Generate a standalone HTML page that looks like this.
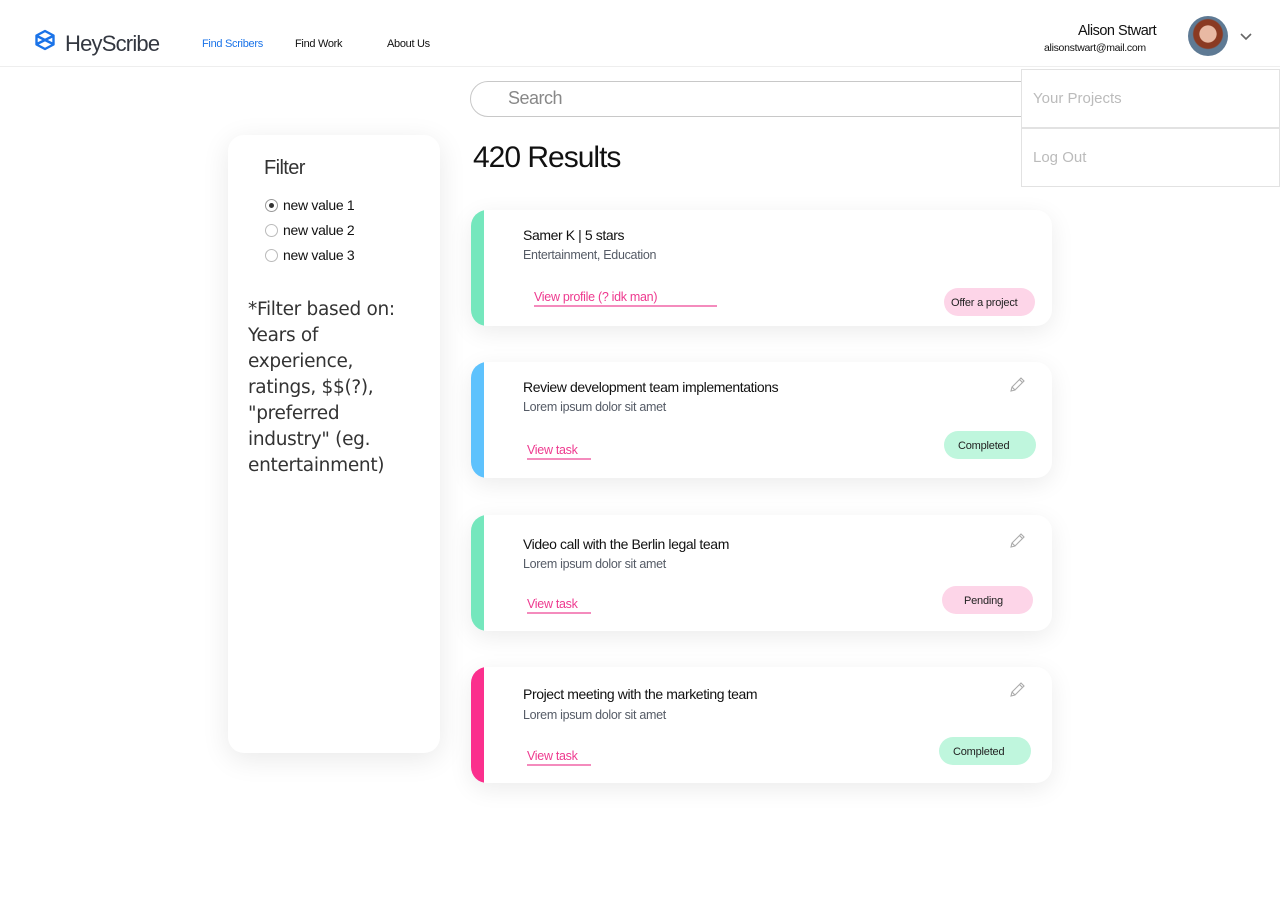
<!DOCTYPE html>
<html><head><meta charset="utf-8"><style>
*{box-sizing:border-box;margin:0;padding:0}
body{width:1280px;height:917px;background:#fff;font-family:"Liberation Sans",sans-serif;position:relative;overflow:hidden}
.a{position:absolute}
.hdr{left:0;top:0;width:1280px;height:67px;border-bottom:1px solid #eee}
.nav{font-size:11px;color:#111;top:38px;letter-spacing:-.3px}
.card{position:absolute;left:471px;width:581px;height:116px;background:#fff;border-radius:16px;box-shadow:0 6px 24px rgba(0,0,0,.08);overflow:hidden}
.card .s{position:absolute;left:0;top:0;width:13px;height:100%}
.card .t{position:absolute;left:52px;top:17px;font-size:14px;color:#111;letter-spacing:-.4px}
.card .d{position:absolute;left:52px;top:38px;font-size:12.5px;color:#555b66;letter-spacing:-.3px}
.card .l{position:absolute;left:56px;top:81px;font-size:12.5px;color:#ee3a8f;border-bottom:2px solid #f48bbd;padding-bottom:1px;letter-spacing:-.3px}
.pill{position:absolute;height:28px;border-radius:14px;font-size:11px;color:#222;line-height:30px;padding-left:14px;letter-spacing:-.2px}
.pen{position:absolute;right:26px;top:14px}
.dd{position:absolute;left:1021px;width:259px;height:59px;background:#fff;border:1px solid #e2e2e2;font-size:15px;color:#bbb;padding:20px 0 0 11px}
.r{position:absolute;left:265px;width:13px;height:13px;border:1px solid #bbb;border-radius:50%}
</style></head><body>
<div class="a hdr"></div>
<svg class="a" style="left:34px;top:29px" width="22" height="22" viewBox="0 0 22 22"><path d="M11 2L19.5 6.5V15.5L11 20L2.5 15.5V6.5Z M3 7L19 15 M19 7L3 15" fill="none" stroke="#1a73e8" stroke-width="2.4" stroke-linejoin="round"/></svg>
<div class="a" style="left:65px;top:31px;font-size:22px;color:#333740;letter-spacing:-.8px">HeyScribe</div>
<div class="a nav" style="left:202px;color:#1a73e8">Find Scribers</div>
<div class="a nav" style="left:295px">Find Work</div>
<div class="a nav" style="left:387px">About Us</div>
<div class="a" style="left:1078px;top:23px;font-size:14.5px;color:#111;letter-spacing:-.5px">Alison Stwart</div>
<div class="a" style="left:1044px;top:42px;font-size:10.5px;color:#111;letter-spacing:-.3px">alisonstwart@mail.com</div>
<div class="a" style="left:1188px;top:16px;width:40px;height:40px;border-radius:50%;background:radial-gradient(circle at 50% 45%,#e8b9a3 0 28%,#8a3a22 30% 48%,#5e7a94 52%)"></div>
<svg class="a" style="left:1239px;top:32px" width="14" height="9"><path d="M2 2L7 7L12 2" fill="none" stroke="#666" stroke-width="1.6"/></svg>
<div class="a" style="left:470px;top:81px;width:600px;height:36px;border:1px solid #c8c8c8;border-radius:18px"></div>
<div class="a" style="left:508px;top:88px;font-size:18px;color:#888;letter-spacing:-.5px">Search</div>
<div class="dd" style="top:69px">Your Projects</div>
<div class="dd" style="top:128px">Log Out</div>
<div class="a" style="left:228px;top:135px;width:212px;height:618px;background:#fff;border-radius:16px;box-shadow:0 6px 28px rgba(0,0,0,.09)"></div>
<div class="a" style="left:264px;top:157px;font-size:20px;color:#333;letter-spacing:-.6px">Filter</div>
<div class="r" style="top:199px;border-color:#999"><div style="width:5px;height:5px;background:#333;border-radius:50%;margin:3px"></div></div>
<div class="r" style="top:224px"></div>
<div class="r" style="top:249px"></div>
<div class="a" style="left:283px;top:193px;font-size:14px;color:#111;line-height:25px;letter-spacing:-.3px">new value 1<br>new value 2<br>new value 3</div>
<div class="a" style="left:248px;top:297px;width:190px;font-family:'DejaVu Sans',sans-serif;font-size:18.5px;line-height:26px;color:#333;letter-spacing:-.3px;white-space:nowrap">*Filter based on:<br>Years of<br>experience,<br>ratings, $$(?),<br>"preferred<br>industry" (eg.<br>entertainment)</div>
<div class="a" style="left:473px;top:141px;font-size:30px;color:#111;letter-spacing:-1px">420 Results</div>

<div class="card" style="top:210px"><div class="s" style="background:#75e7bd"></div><div class="t">Samer K | 5 stars</div><div class="d">Entertainment, Education</div><div class="l" style="left:63px;width:183px;top:80px">View profile (? idk man)</div><div class="pill" style="left:473px;top:78px;width:91px;background:#fdd5e8;padding-left:7px">Offer a project</div></div>

<div class="card" style="top:362px"><div class="s" style="background:#5ec2fd"></div><div class="t">Review development team implementations</div><div class="d">Lorem ipsum dolor sit amet</div><div class="l" style="width:64px">View task</div><div class="pill" style="left:473px;top:69px;width:92px;background:#bff6dd">Completed</div>
<svg class="pen" width="18" height="18" viewBox="0 0 18 18"><path d="M3 15L4 11L13 2L16 5L7 14Z M11.5 3.5L14.5 6.5 M4 11L7 14" fill="none" stroke="#aaa" stroke-width="1.1"/></svg></div>

<div class="card" style="top:515px"><div class="s" style="background:#75e7bd"></div><div class="t" style="top:21px">Video call with the Berlin legal team</div><div class="d" style="top:42px">Lorem ipsum dolor sit amet</div><div class="l" style="width:64px;top:82px">View task</div><div class="pill" style="left:471px;width:91px;background:#fdd5e8;padding-left:22px;top:71px">Pending</div>
<svg class="pen" width="18" height="18" viewBox="0 0 18 18" style="top:17px"><path d="M3 15L4 11L13 2L16 5L7 14Z M11.5 3.5L14.5 6.5 M4 11L7 14" fill="none" stroke="#aaa" stroke-width="1.1"/></svg></div>

<div class="card" style="top:667px"><div class="s" style="background:#fb2f8d"></div><div class="t" style="top:19px">Project meeting with the marketing team</div><div class="d" style="top:41px">Lorem ipsum dolor sit amet</div><div class="l" style="width:64px;top:82px">View task</div><div class="pill" style="left:468px;top:70px;width:92px;background:#bff6dd">Completed</div>
<svg class="pen" width="18" height="18" viewBox="0 0 18 18" style="top:14px"><path d="M3 15L4 11L13 2L16 5L7 14Z M11.5 3.5L14.5 6.5 M4 11L7 14" fill="none" stroke="#aaa" stroke-width="1.1"/></svg></div>
</body></html>
